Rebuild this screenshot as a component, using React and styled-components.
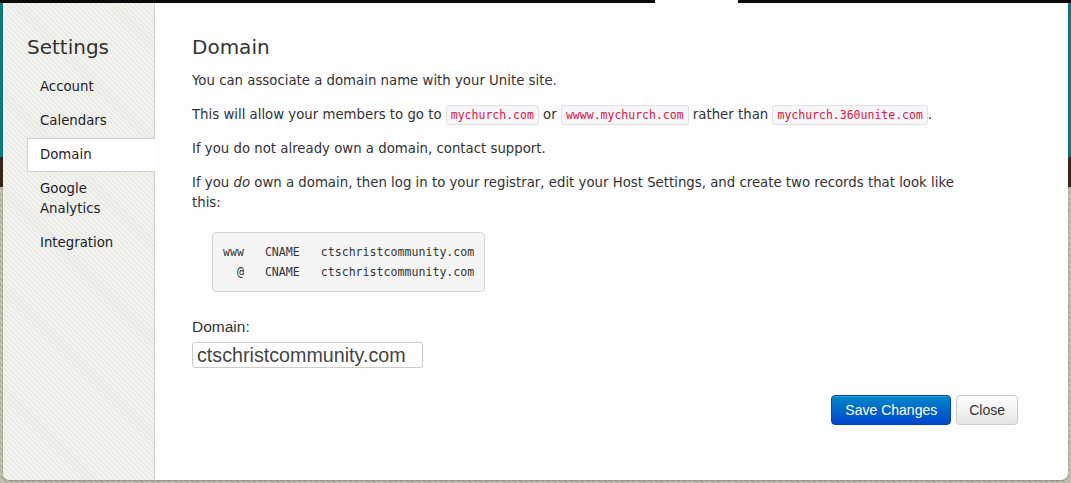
import React from 'react';
import styled, { createGlobalStyle } from 'styled-components';

const GlobalStyle = createGlobalStyle`
  html, body {
    margin: 0;
    padding: 0;
    overflow: hidden;
  }
  body {
    font-family: "DejaVu Sans", Verdana, sans-serif;
    color: #333;
  }
`;

const Page = styled.div`
  width: 1071px;
  height: 483px;
  display: flex;
  flex-direction: column;
  background:
    linear-gradient(
      to bottom,
      #0b7b7e 0,
      #0b7b7e 157px,
      #35281f 157px,
      #35281f 187px,
      transparent 187px
    ),
    repeating-linear-gradient(45deg, #b4b3a4 0, #b4b3a4 2px, #c6c5b8 2px, #c6c5b8 4px);
`;

const TopStrip = styled.div`
  height: 3px;
  flex: none;
  background: #0a0a0a;
  display: flex;
`;

const TopTab = styled.div`
  width: 83px;
  margin-left: 655px;
  background: #fff;
`;

const Modal = styled.div`
  flex: none;
  height: 477px;
  margin: 0 3px;
  display: flex;
  border-radius: 0 0 7px 7px;
  overflow: hidden;
  background: #fdfdfd;
  box-shadow: 0 1px 2px rgba(0, 0, 0, 0.25);
`;

const Sidebar = styled.nav`
  width: 152px;
  flex: none;
  box-sizing: border-box;
  padding: 29px 0 0 24px;
  border-right: 1px solid #cfcfc8;
  background: repeating-linear-gradient(
    45deg,
    #f2f2ee 0,
    #f2f2ee 2px,
    #eaeae5 2px,
    #eaeae5 3.5px
  );
`;

const SideTitle = styled.h2`
  margin: 0 0 8px;
  font-size: 20px;
  line-height: 30px;
  font-weight: normal;
  color: #333;
`;

const NavList = styled.ul`
  list-style: none;
  margin: 0;
  padding: 0;
`;

const NavItem = styled.li`
  margin-right: -1px;
  padding: 6px 8px 6px 12px;
  font-size: 13.3px;
  line-height: 20px;
  color: #1e1b2c;
  border: 1px solid ${p => (p.$active ? '#cfcfcf' : 'transparent')};
  border-right: none;
  background: ${p => (p.$active ? '#fff' : 'transparent')};
`;

const Content = styled.main`
  flex: 1;
  padding: 29px 50px 0 37px;
  display: flex;
  flex-direction: column;
`;

const Heading = styled.h3`
  margin: 0 0 9px;
  font-size: 20px;
  line-height: 30px;
  font-weight: normal;
  color: #333;
`;

const Para = styled.p`
  margin: 0 0 14px;
  max-width: 780px;
  font-size: 13.3px;
  line-height: 20px;
  color: #333;
`;

const Code = styled.code`
  font-family: "DejaVu Sans Mono", "Liberation Mono", monospace;
  font-size: 11.5px;
  padding: 2px 4px;
  color: #dd1144;
  background: #f7f7f9;
  border: 1px solid #e1e1e8;
  border-radius: 3px;
`;

const Records = styled.pre`
  align-self: flex-start;
  margin: 5px 0 25px 20px;
  padding: 9px 10px;
  font-family: "DejaVu Sans Mono", "Liberation Mono", monospace;
  font-size: 11.6px;
  line-height: 20px;
  color: #333;
  background: #f5f5f5;
  border: 1px solid #d6d6d6;
  border-radius: 4px;
`;

const Label = styled.label`
  font-family: "Liberation Sans", Arial, sans-serif;
  font-size: 15.5px;
  line-height: 20px;
  color: #333;
`;

const TextInput = styled.input`
  align-self: flex-start;
  box-sizing: border-box;
  width: 231px;
  height: 26px;
  margin-top: 5px;
  padding: 0 4px;
  font-family: "Liberation Sans", Arial, sans-serif;
  font-size: 19.7px;
  color: #444;
  background: #fff;
  border: 1px solid #ccc;
  border-radius: 3px;
  outline: none;
`;

const Actions = styled.div`
  display: flex;
  justify-content: flex-end;
  gap: 5px;
  margin-top: 27px;
`;

const Button = styled.button`
  height: 30px;
  padding: 0 ${p => (p.$primary ? '13px' : '12px')};
  font-family: "Liberation Sans", Arial, sans-serif;
  font-size: 14px;
  border-radius: 4px;
  cursor: pointer;
  color: ${p => (p.$primary ? '#fff' : '#333')};
  border: 1px solid ${p => (p.$primary ? '#0046b8' : '#cccccc')};
  background: ${p =>
    p.$primary
      ? 'linear-gradient(to bottom, #0088cc, #0044cc)'
      : 'linear-gradient(to bottom, #ffffff, #e6e6e6)'};
  box-shadow: inset 0 1px 0 rgba(255, 255, 255, 0.2);
`;

const navItems = ['Account', 'Calendars', 'Domain', 'Google Analytics', 'Integration'];

const records = `www   CNAME   ctschristcommunity.com
  @   CNAME   ctschristcommunity.com`;

const App = () => (
  <>
    <GlobalStyle />
    <Page>
      <TopStrip>
        <TopTab />
      </TopStrip>
      <Modal>
        <Sidebar>
          <SideTitle>Settings</SideTitle>
          <NavList>
            {navItems.map(item => (
              <NavItem key={item} $active={item === 'Domain'}>
                {item === 'Google Analytics' ? (
                  <>
                    Google
                    <br />
                    Analytics
                  </>
                ) : (
                  item
                )}
              </NavItem>
            ))}
          </NavList>
        </Sidebar>
        <Content>
          <Heading>Domain</Heading>
          <Para>You can associate a domain name with your Unite site.</Para>
          <Para>
            This will allow your members to go to <Code>mychurch.com</Code> or{' '}
            <Code>wwww.mychurch.com</Code> rather than <Code>mychurch.360unite.com</Code>.
          </Para>
          <Para>If you do not already own a domain, contact support.</Para>
          <Para>
            If you <em>do</em> own a domain, then log in to your registrar, edit your Host
            Settings, and create two records that look like this:
          </Para>
          <Records>{records}</Records>
          <Label htmlFor="domain">Domain:</Label>
          <TextInput id="domain" defaultValue="ctschristcommunity.com" />
          <Actions>
            <Button $primary>Save Changes</Button>
            <Button>Close</Button>
          </Actions>
        </Content>
      </Modal>
    </Page>
  </>
);

export default App;
